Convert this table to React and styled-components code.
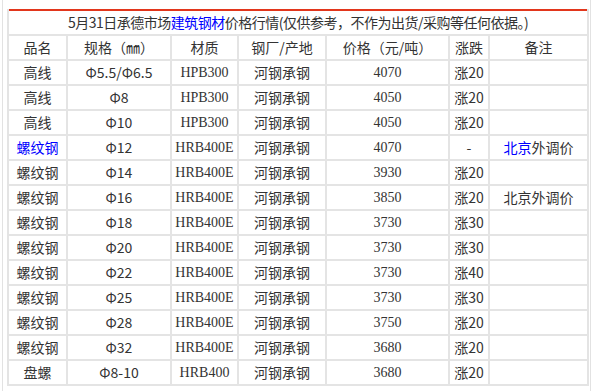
import React from "react";
import styled, { createGlobalStyle } from "styled-components";

// price rows for the day, remark parts marked with link: true render blue
const rows = [
    { name: "高线", spec: "Φ5.5/Φ6.5", grade: "HPB300", price: "4070", change: "涨20" },
    { name: "高线", spec: "Φ8", grade: "HPB300", price: "4050", change: "涨20" },
    { name: "高线", spec: "Φ10", grade: "HPB300", price: "4050", change: "涨20" },
    {
        name: "螺纹钢",
        nameLink: true,
        spec: "Φ12",
        grade: "HRB400E",
        price: "4070",
        change: "-",
        note: [{ text: "北京", link: true }, { text: "外调价" }],
    },
    { name: "螺纹钢", spec: "Φ14", grade: "HRB400E", price: "3930", change: "涨20" },
    {
        name: "螺纹钢",
        spec: "Φ16",
        grade: "HRB400E",
        price: "3850",
        change: "涨20",
        note: [{ text: "北京外调价" }],
    },
    { name: "螺纹钢", spec: "Φ18", grade: "HRB400E", price: "3730", change: "涨30" },
    { name: "螺纹钢", spec: "Φ20", grade: "HRB400E", price: "3730", change: "涨30" },
    { name: "螺纹钢", spec: "Φ22", grade: "HRB400E", price: "3730", change: "涨40" },
    { name: "螺纹钢", spec: "Φ25", grade: "HRB400E", price: "3730", change: "涨30" },
    { name: "螺纹钢", spec: "Φ28", grade: "HRB400E", price: "3750", change: "涨20" },
    { name: "螺纹钢", spec: "Φ32", grade: "HRB400E", price: "3680", change: "涨20" },
    { name: "盘螺", spec: "Φ8-10", grade: "HRB400", price: "3680", change: "涨20" },
];

const columns = [
    { label: "品名", width: 59 },
    { label: "规格（㎜）", width: 104 },
    { label: "材质", width: 67 },
    { label: "钢厂/产地", width: 88 },
    { label: "价格（元/吨）", width: 123 },
    { label: "涨跌", width: 40 },
    { label: "备注", width: 99 },
];

const App = () => (
    <>
        <GlobalStyle />
        <Page>
            <PriceTable>
                <colgroup>
                    { columns.map((c) => (
                        <col key={ c.label } style={ { width: c.width } } />
                    )) }
                </colgroup>
                <tbody>
                    <tr>
                        <TitleCell colSpan={ 7 }>
                            5月31日承德市场<Blue>建筑钢材</Blue>价格行情(仅供参考，不作为出货/采购等任何依据。)
                        </TitleCell>
                    </tr>
                    <tr>
                        { columns.map((c) => (
                            <Cell key={ c.label }>{ c.label }</Cell>
                        )) }
                    </tr>
                    { rows.map((r, i) => (
                        <tr key={ i }>
                            <Cell>{ r.nameLink ? <Blue>{ r.name }</Blue> : r.name }</Cell>
                            <Cell>{ r.spec }</Cell>
                            <Cell $latin>{ r.grade }</Cell>
                            <Cell>河钢承钢</Cell>
                            <Cell $latin>{ r.price }</Cell>
                            <Cell>{ r.change }</Cell>
                            <Cell>
                                { (r.note || []).map((n) =>
                                    n.link ? <Blue key={ n.text }>{ n.text }</Blue> : n.text
                                ) }
                            </Cell>
                        </tr>
                    )) }
                </tbody>
            </PriceTable>
        </Page>
    </>
);

const GlobalStyle = createGlobalStyle`
  html, body {
    margin: 0;
    padding: 0;
    background: #fff;
  }
  body {
    font-family: "Noto Sans CJK SC", "Liberation Serif", sans-serif;
    color: #333;
  }
`;

const Page = styled.div`
  margin-left: 2px;
  width: 589px;
  min-height: 391px;
  box-sizing: border-box;
  border-left: 1px solid #e2e2e2;
  border-right: 1px solid #e2e2e2;
  padding: 9px 0 0 4px;
`;

const PriceTable = styled.table`
  width: 580px;
  table-layout: fixed;
  border-collapse: collapse;
  border-top: 2px solid #e2361c;
  font-size: 14px;
`;

const Cell = styled.td`
  height: 23px;
  padding: 0;
  border: 2px solid #e4e4e4;
  text-align: center;
  vertical-align: middle;
  line-height: 23px;
  white-space: nowrap;
  overflow: hidden;
  font-family: ${ (p) =>
        p.$latin
            ? `"Liberation Serif", "Noto Sans CJK SC", serif`
            : `"Noto Sans CJK SC", "Liberation Serif", sans-serif` };
`;

const TitleCell = styled(Cell)`
  border-top: none;
  height: 22px;
  letter-spacing: -0.5px;
`;

const Blue = styled.span`
  color: #0000ff;
`;

export default App;
